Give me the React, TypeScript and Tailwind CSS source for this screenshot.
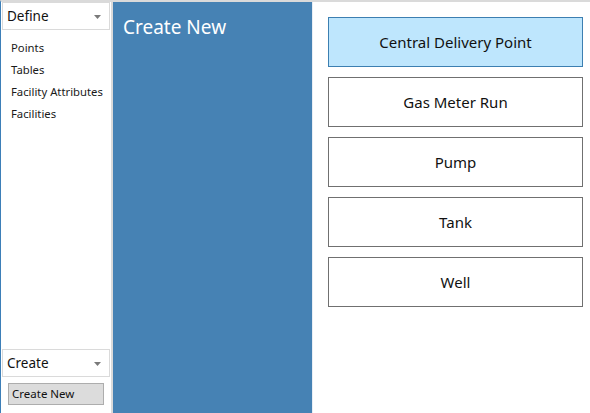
import React, { useState } from 'react';

const facilityTypes = ['Central Delivery Point', 'Gas Meter Run', 'Pump', 'Tank', 'Well'];
const defineItems = ['Points', 'Tables', 'Facility Attributes', 'Facilities'];

// Small combo box with the little grey caret on the right
const ComboBox: React.FC<{ label: string }> = ({ label }) => (
  <div className="h-[28px] mx-[1px] border border-[#dadada] bg-white flex items-center justify-between pl-[4px] pr-[8px]">
    <span className="text-[13.5px] text-[#111]">{label}</span>
    <svg width="7" height="4" viewBox="0 0 7 4" className="mt-[1px]">
      <path d="M0 0 H7 L3.5 4 Z" fill="#7a7a7a" />
    </svg>
  </div>
);

const App: React.FC = () => {
  const [selected, setSelected] = useState(0);

  return (
    <div
      className="w-[590px] h-[413px] flex bg-white border-t-2 border-[#dadada] border-l border-l-[#3d7fb8] overflow-hidden"
      style={{ fontFamily: '"Noto Sans", "Open Sans", sans-serif' }}
    >
      {/* Navigation column */}
      <div className="w-[112px] shrink-0 flex flex-col border-r-2 border-[#dadada]">
        <ComboBox label="Define" />
        <ul className="mt-[7px] pl-[10px] text-[11.3px] text-[#1a1a1a] leading-[22px]">
          {defineItems.map((item) => (
            <li key={item}>{item}</li>
          ))}
        </ul>
        <div className="flex-1" />
        <ComboBox label="Create" />
        <div className="px-[7px] pt-[6px] pb-[8px]">
          <div className="h-[22px] border border-[#adadad] bg-[#dcdcdc] flex items-center pl-[3px] text-[11.5px] text-[#111]">
            Create New
          </div>
        </div>
      </div>

      {/* Section header */}
      <div className="w-[200px] shrink-0 bg-[#4682b4] border-r border-[#e8eef5] px-[10px] pt-[13px]">
        <h1 className="text-[19px] text-white leading-[24px]">Create New</h1>
      </div>

      {/* Facility type buttons */}
      <div className="flex-1 pl-[15px] pr-[7px] pt-[15px] flex flex-col gap-[10px]">
        {facilityTypes.map((name, i) => (
          <button
            key={name}
            onClick={() => setSelected(i)}
            className={
              i === selected
                ? 'h-[50px] w-full border border-[#3c7fb1] bg-[#bee6fd] text-[15px] text-[#111] pt-[1px]'
                : 'h-[50px] w-full border border-[#707070] bg-white text-[15px] text-[#111] pt-[1px]'
            }
          >
            {name}
          </button>
        ))}
      </div>
    </div>
  );
};

export default App;
